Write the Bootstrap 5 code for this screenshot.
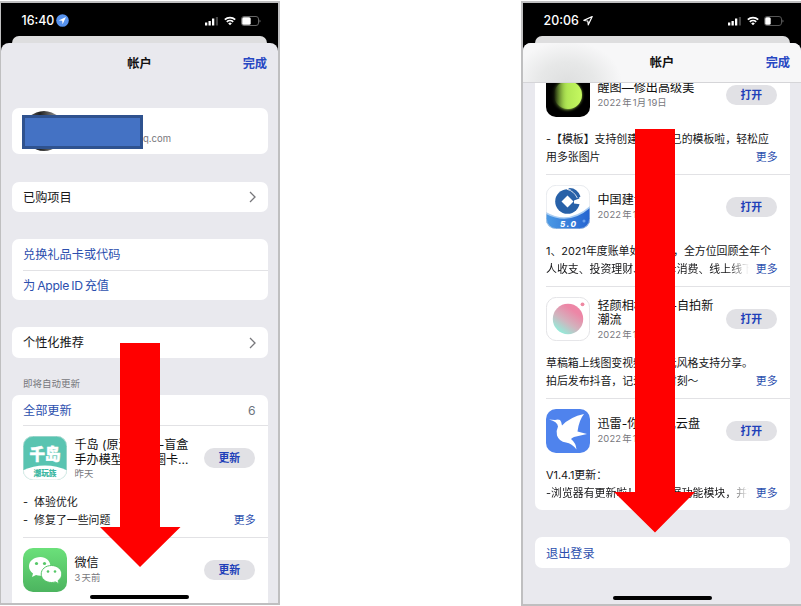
<!DOCTYPE html>
<html lang="zh-CN">
<head>
<meta charset="utf-8">
<meta name="viewport" content="width=device-width, initial-scale=1">
<title>帐户</title>
<link href="https://cdn.jsdelivr.net/npm/bootstrap@5.3.0/dist/css/bootstrap.min.css" rel="stylesheet">
<style>
  body{width:801px;height:606px;overflow:hidden;background:#fff;color:#161618;font-family:Inter,"Noto Sans CJK SC",sans-serif;font-size:12.2px;line-height:15px}
  svg{display:block;flex-shrink:0}
  .phone{border:2px solid #bfbfc0;background:#000;position:relative;overflow:hidden;margin-top:1px}
  .phone-a{width:280px;height:604px;border-left-width:1px}
  .phone-b{width:280px;height:605px;border-right:0}
  .status{height:32.5px;padding:3px 17px 0 20.5px;color:#fff;font-size:12.4px;font-weight:500}
  .backsheet{height:7px;margin:0 11px;border-radius:7px 7px 0 0;background:#dededf}
  .phone-b .backsheet{margin-left:12px}
  .sheet{height:562px;background:#e9e9ee;border-radius:8px 8px 0 0;overflow:hidden}
  .titlebar{height:40px;display:grid;grid-template-columns:1fr auto 1fr;align-items:center;padding:1px 11px 0;font-size:12.2px;font-weight:700;color:#111}
  .phone-b .titlebar{border-bottom:1px solid #d5d5d8;background:radial-gradient(ellipse 55px 42px at 44px 40px,#dedfdf 0,#e7e8e8 50%,transparent 100%),#f7f7f8}
  .blue{color:#2c4fae}
  .done{color:#2748c3}
  .panel{background:#fff;border-radius:7px;margin:0 10.6px;padding-left:11.4px;width:256px}
  .phone-b .panel{margin-left:11.6px;width:255px}
  .line{height:30.5px;padding:1px 12px 0 0}
  .line + .line,.app{border-top:1px solid #e2e2e5}
  .latin{letter-spacing:-.3px;word-spacing:-1px;margin:0 2px}
  .caption-sm{font-size:9.5px;line-height:14px;color:#77777c}
  .app{height:112px;padding-top:9.5px}
  .app-head{height:44.5px;padding-right:12.5px}
  .app-text{margin-left:7.5px;padding-top:2px}
  .app-name{font-size:12.1px;line-height:14.7px;white-space:nowrap;color:#111;padding-top:1.5px;margin-bottom:-1px}
  .date{font-size:9.4px;line-height:15px;letter-spacing:.15px;word-spacing:-1.700px;color:#77777c}
  .pill{width:51.5px;height:20px;padding-top:1px;border-radius:10px;background:#e1e1e5;color:#203fb9;font-size:10.8px;font-weight:700;flex-shrink:0}
  .notes{font-size:10.9px;line-height:18px;padding:13.2px 12px 0 0;white-space:nowrap}
  .fade-end{width:204px;overflow:hidden;-webkit-mask-image:linear-gradient(90deg,#000 calc(100% - 22px),transparent calc(100% - 1px));mask-image:linear-gradient(90deg,#000 calc(100% - 22px),transparent calc(100% - 1px))}
  .hid{display:inline-block;overflow:hidden;vertical-align:top;height:14px}
  .w-a{width:28px}.w-b{width:31px}.w-c{width:25.5px}.w-d{width:36.500px}
  .mark-over{position:absolute}
  .arrow-a{left:99px;top:340px}
  .arrow-b{left:91px;top:126px}
  .redact{left:21px;top:112px;width:121px;height:34px;background:#4472c4;border:3px solid #2f528f}
  .avatar{width:30px;height:40px;margin-left:6px}
  .mail{margin:16px 0 0 84px}
  .homebar{width:99px;height:3.5px;border-radius:2px;background:#000;left:89px;top:592px}
  .phone-b .homebar{left:90px;top:593px}
</style>
</head>
<body>
<svg width="0" height="0" class="position-absolute" aria-hidden="true">
  <symbol id="signal" viewBox="0 0 14 10"><path fill="#fff" d="M0 6.500h2.300v3H0zM3.500 5h2.300v4.500H3.500zM7 2.500h2.300v7H7z"/><path fill="#444" d="M10.800 1h2.200v8.500h-2.200z"/></symbol>
  <symbol id="wifi" viewBox="0 0 12 10"><g fill="none" stroke="#fff" stroke-width="1.700"><path d="M.8 3.600a7.600 7.600 0 0 1 10.400 0M2.800 5.900a4.700 4.700 0 0 1 6.400 0"/></g><path fill="#fff" d="M4.200 7.400a2.700 2.700 0 0 1 3.600 0L6 9.300z"/></symbol>
  <symbol id="chev" viewBox="0 0 7 12"><path d="M1 1l5 5-5 5" fill="none" stroke="#77777b" stroke-width="1.300"/></symbol>
</svg>
<div class="d-flex justify-content-between align-items-start">

  <section class="phone phone-a">
    <div class="status d-flex align-items-center">
      <span>16:40</span>
      <svg width="13" height="13" viewBox="0 0 13 13" style="margin-left:2px"><circle cx="6.500" cy="6.500" r="6.300" fill="#5692ee"/><path d="M10 3L2.700 6.400l3.500.4.400 3.500z" fill="#fff"/></svg>
      <span class="flex-grow-1"></span>
      <svg width="14" height="10"><use href="#signal"/></svg>
      <svg class="mx-1" width="14" height="10"><use href="#wifi"/></svg>
      <svg width="20" height="10" viewBox="0 0 20 10"><rect x=".5" y=".5" width="17" height="9" rx="2.500" fill="none" stroke="#666"/><rect x="1.200" y="1.200" width="8.500" height="7.600" rx="1.500" fill="#fff"/><path d="M18.500 3.500v3q1-.5 1-1.500t-1-1.500" fill="#777"/></svg>
    </div>
    <div class="backsheet"></div>
    <div class="sheet">
      <div class="titlebar"><span></span><span>帐户</span><span class="done text-end">完成</span></div>
      <div class="panel d-flex align-items-center" style="height:46.5px;margin-top:25px">
        <svg class="avatar" viewBox="0 0 30 40"><defs><linearGradient id="av"><stop offset="0" stop-color="#777"/><stop offset=".4" stop-color="#222"/><stop offset="1" stop-color="#bbb"/></linearGradient></defs><circle cx="15" cy="20" r="20" fill="url(#av)"/></svg>
        <span class="caption-sm mail">q.com</span>
      </div>
      <div class="panel" style="margin-top:27.500px"><div class="line d-flex align-items-center justify-content-between"><span>已购项目</span><svg width="7" height="12"><use href="#chev"/></svg></div></div>
      <div class="panel blue" style="margin-top:27px">
        <div class="line d-flex align-items-center">兑换礼品卡或代码</div>
        <div class="line d-flex align-items-center">为<span class="latin">Apple ID</span>充值</div>
      </div>
      <div class="panel" style="margin-top:27px"><div class="line d-flex align-items-center justify-content-between"><span>个性化推荐</span><svg width="7" height="12"><use href="#chev"/></svg></div></div>
      <div class="caption-sm" style="margin:19px 22px 4px">即将自动更新</div>
      <div class="panel">
        <div class="line d-flex align-items-center justify-content-between"><span class="blue">全部更新</span><span class="text-secondary">6</span></div>
        <article class="app">
          <div class="app-head d-flex align-items-center">
            <svg width="44" height="44" viewBox="0 0 44 44"><defs><clipPath id="c1"><rect width="44" height="44" rx="10"/></clipPath></defs><g clip-path="url(#c1)"><path fill="#59c4b1" d="M0 0h44v44H0z"/><ellipse cx="22" cy="45" rx="30" ry="15.500" fill="#fff"/></g><rect x=".3" y=".3" width="43.400" height="43.400" rx="10" fill="none" stroke="#d8e6e3" stroke-width=".6"/><text x="22" y="23.500" text-anchor="middle" font-size="15.500" font-weight="900" fill="#fff" stroke="#fff" stroke-width=".5">千岛</text><text x="22" y="39.500" text-anchor="middle" font-size="7.700" font-weight="900" fill="#40b8a3">潮玩族</text></svg>
            <div class="app-text flex-grow-1"><div class="app-name">千岛 (原潮<span class="hid w-a">玩族)</span>-盲盒<br>手办模型<span class="hid w-b">潮玩</span>圈卡…</div><div class="date">昨天</div></div>
            <div class="pill d-flex align-items-center justify-content-center">更新</div>
          </div>
          <div class="notes"><div>-&nbsp; 体验优化</div><div class="d-flex justify-content-between"><span>-&nbsp; 修复了一些问题</span><span class="blue">更多</span></div></div>
        </article>
        <article class="app">
          <div class="app-head d-flex align-items-center">
            <svg width="44" height="44" viewBox="0 0 44 44"><defs><linearGradient id="wg" x2="0" y2="1"><stop stop-color="#6be07a"/><stop offset="1" stop-color="#4cb45f"/></linearGradient></defs><rect width="44" height="44" rx="10" fill="url(#wg)"/><path d="M17.500 9C11 9 6 13 6 18.300c0 3 1.500 5.500 4 7.200L9 29l4-2q2 .8 5.500.7h9V18C27 12.500 23 9 17.500 9z" fill="#fff"/><circle cx="13.500" cy="15.500" r="1.600" fill="#56c768"/><circle cx="21.500" cy="15.500" r="1.600" fill="#56c768"/><path d="M28.500 17.500c-6 0-10.300 3.800-10.300 8.500s4.300 8.500 10.300 8.500q2 0 4-.6l3.600 2-1-3.300c2.300-1.600 3.700-4 3.700-6.600 0-4.700-4.500-8.500-10.300-8.500z" fill="#fff" stroke="#55c467"/><circle cx="25" cy="23.500" r="1.300" fill="#56c768"/><circle cx="32" cy="23.500" r="1.300" fill="#56c768"/></svg>
            <div class="app-text pt-0 flex-grow-1"><div class="app-name">微信</div><div class="date">3 天前</div></div>
            <div class="pill d-flex align-items-center justify-content-center">更新</div>
          </div>
        </article>
      </div>
    </div>
    <div class="mark-over redact"></div>
    <svg class="mark-over arrow-a" width="81" height="225" viewBox="0 0 81 225"><path fill="red" d="M20 0h40v184h20.500L40 224 0 184h20z"/></svg>
    <div class="mark-over homebar"></div>
  </section>

  <section class="phone phone-b">
    <div class="status d-flex align-items-center">
      <span>20:06</span>
      <svg class="ms-1" width="10" height="11" viewBox="0 0 10 11"><path d="M9.200 1.500L.9 5.400l3.900.6.500 3.800z" fill="none" stroke="#fff" stroke-width="1.200" stroke-linejoin="round"/></svg>
      <span class="flex-grow-1"></span>
      <svg width="14" height="10"><use href="#signal"/></svg>
      <svg class="mx-1" width="14" height="10"><use href="#wifi"/></svg>
      <svg width="20" height="10" viewBox="0 0 20 10"><rect x=".5" y=".5" width="17" height="9" rx="2.500" fill="none" stroke="#555"/><rect x="1.200" y="1.200" width="5.500" height="7.600" rx="1.500" fill="#fff"/><path d="M18.500 3.500v3q1-.5 1-1.500t-1-1.500" fill="#777"/></svg>
    </div>
    <div class="backsheet"></div>
    <div class="sheet">
      <div class="titlebar"><span></span><span>帐户</span><span class="done text-end">完成</span></div>
      <div class="overflow-hidden">
        <div class="panel" style="margin-top:-20.700px;height:448.500px">
          <article class="app">
            <div class="app-head d-flex align-items-center">
              <svg width="44" height="44" viewBox="0 0 44 44"><defs><linearGradient id="gg"><stop offset="0" stop-color="#8cc040" stop-opacity="0"/><stop offset=".5" stop-color="#b2e855"/><stop offset="1" stop-color="#c5f960"/></linearGradient><filter id="bl"><feGaussianBlur stdDeviation="1.500"/></filter></defs><rect width="44" height="44" rx="10"/><circle cx="21" cy="22" r="14.500" fill="url(#gg)" filter="url(#bl)"/><circle cx="22" cy="22" r="14" fill="url(#gg)"/></svg>
              <div class="app-text pt-0 flex-grow-1"><div class="app-name">醒图—修出高级美</div><div class="date">2022 年 1月 19日</div></div>
              <div class="pill d-flex align-items-center justify-content-center">打开</div>
            </div>
            <div class="notes"><div>-【模板】支持创建属于自己的模板啦，轻松应</div><div class="d-flex justify-content-between"><span>用多张图片</span><span class="blue">更多</span></div></div>
          </article>
          <article class="app">
            <div class="app-head d-flex align-items-center">
              <svg width="44" height="44" viewBox="0 0 44 44"><defs><clipPath id="c2"><rect width="44" height="44" rx="10"/></clipPath><linearGradient id="bg2"><stop stop-color="#4d9be5"/><stop offset="1" stop-color="#2463d0"/></linearGradient></defs><g clip-path="url(#c2)"><path fill="#fff" d="M0 0h44v44H0z"/><path d="M0 27q22 13 44-6v23H0z" fill="#a9cdf3"/><path d="M0 29q23 12 44-6v21H0z" fill="url(#bg2)"/></g><rect x=".3" y=".3" width="43.400" height="43.400" rx="10" fill="none" stroke="#d7dbe2" stroke-width=".6"/><circle cx="21.500" cy="16.500" r="12.300" fill="#2861a8"/><path d="M28 15.500l8-3v7l-8-1z" fill="#fff"/><path d="M22 3q9-1 12.500 8.500L32 13Q28 6 22 3z" fill="#2861a8"/><path d="M21 4.300q7 1.700 10.300 8.700" fill="none" stroke="#fff" stroke-width=".8"/><path d="M21.500 10.500l6 6-6 6-6-6z" fill="#fff"/><text x="22" y="41.500" text-anchor="middle" font-size="8" font-weight="800" font-style="italic" textLength="16" fill="#fff">5.0</text><circle cx="38" cy="36" r="1.500" fill="#6aa0ec"/></svg>
              <div class="app-text pt-0 flex-grow-1"><div class="app-name">中国建设银行</div><div class="date">2022 年 1月 18日</div></div>
              <div class="pill d-flex align-items-center justify-content-center">打开</div>
            </div>
            <div class="notes"><div>1、2021年度账单如约而至，全方位回顾全年个</div><div class="d-flex justify-content-between"><span class="fade-end">人收支、投资理财、信用卡消费、线上线下</span><span class="blue">更多</span></div></div>
          </article>
          <article class="app">
            <div class="app-head d-flex align-items-center">
              <svg width="44" height="44" viewBox="0 0 44 44"><defs><linearGradient id="pk" x1=".75" y1=".15" x2=".2" y2=".95"><stop offset=".1" stop-color="#ed86a6"/><stop offset=".55" stop-color="#d1b4be"/><stop offset="1" stop-color="#8df1dc"/></linearGradient></defs><rect x=".4" y=".4" width="43.200" height="43.200" rx="10" fill="#fff" stroke="#dcdce0" stroke-width=".8"/><circle cx="22" cy="22" r="15.200" fill="url(#pk)"/><circle cx="36.500" cy="7.300" r="1.900" fill="#ee88a2"/></svg>
              <div class="app-text flex-grow-1"><div class="app-name">轻颜相机<span class="hid w-c">风格</span>-自拍新<br>潮流</div><div class="date">2022 年 1月 18日</div></div>
              <div class="pill d-flex align-items-center justify-content-center">打开</div>
            </div>
            <div class="notes"><div>草稿箱上线图变视频、多元风格支持分享。</div><div class="d-flex justify-content-between"><span>拍后发布抖音，记录美好时刻～</span><span class="blue">更多</span></div></div>
          </article>
          <article class="app">
            <div class="app-head d-flex align-items-center">
              <svg width="44" height="44" viewBox="0 0 44 44"><rect width="44" height="44" rx="10" fill="#4f83ed"/><path d="M3 10.500l6 .5q3-1 5 0 1.500 1.500 2 5.500Q24 8 38 5q-5 6-6.500 17.500l9.500 2.500-13 3q-2 .8-3 2 5 4 5.500 10.500-4.500-6-10.500-7-7-1-9-7-1.200-4.500 1-9-.5-5-9-7z" fill="#fff"/></svg>
              <div class="app-text pt-0 flex-grow-1"><div class="app-name">迅雷-你<span class="hid w-d">的手机</span>云盘</div><div class="date">2022 年 1月 17日</div></div>
              <div class="pill d-flex align-items-center justify-content-center">打开</div>
            </div>
            <div class="notes"><div>V1.4.1更新：</div><div class="d-flex justify-content-between"><span class="fade-end">-浏览器有更新啦！新增拓展功能模块，并可</span><span class="blue">更多</span></div></div>
          </article>
        </div>
        <div class="panel blue" style="margin-top:27px"><div class="line d-flex align-items-center">退出登录</div></div>
      </div>
    </div>
    <svg class="mark-over arrow-b" width="81" height="404" viewBox="0 0 81 404"><path fill="red" d="M21 0h40v363h20L41 403.500 0 363h21z"/></svg>
    <div class="mark-over homebar"></div>
  </section>
</div>
<script src="https://cdn.jsdelivr.net/npm/bootstrap@5.3.0/dist/js/bootstrap.bundle.min.js"></script>
</body>
</html>
